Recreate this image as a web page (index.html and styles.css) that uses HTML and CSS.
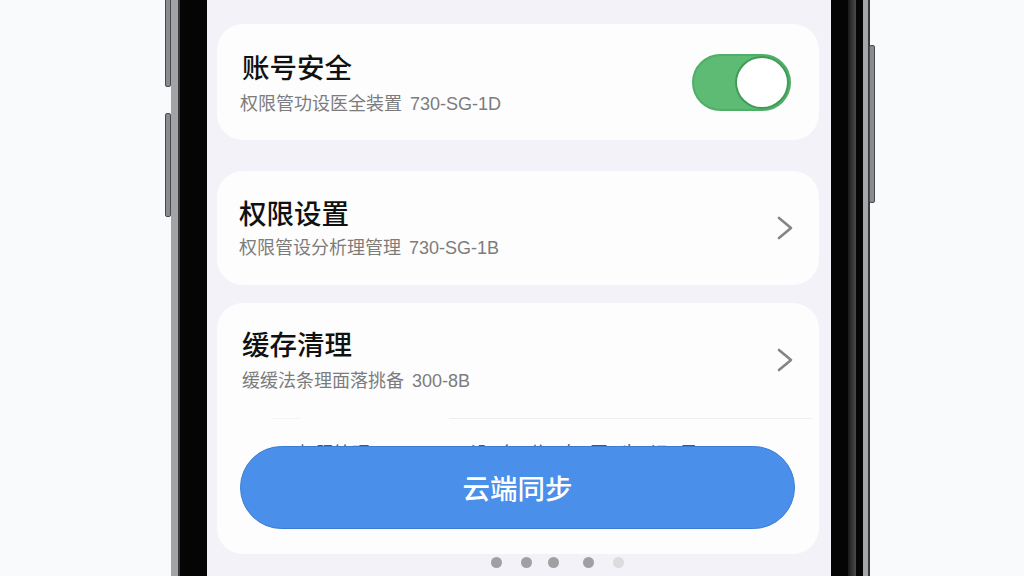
FILE: index.html
```html
<!DOCTYPE html>
<html lang="zh-CN">
<head>
    <meta charset="UTF-8">
    <meta name="viewport" content="width=device-width, initial-scale=1.0">
    <title>设置</title>
    <link rel="stylesheet" href="styles.css">
</head>
<body>
    <div class="phone">
        <span class="side-btn side-btn-top"></span>
        <span class="side-btn side-btn-mid"></span>
        <span class="side-btn side-btn-right"></span>
        <div class="screen">
            <section class="card card-security">
                <div class="card-text">
                    <h2 class="card-title">账号安全</h2>
                    <p class="card-sub">权限管功设医全装置 730-SG-1D</p>
                </div>
                <span class="toggle"><span class="toggle-knob"></span></span>
            </section>

            <section class="card card-access">
                <div class="card-text">
                    <h2 class="card-title">权限设置</h2>
                    <p class="card-sub">权限管设分析理管理 730-SG-1B</p>
                </div>
                <svg class="chevron" viewBox="0 0 16 24" width="16" height="24">
                    <path d="M2 2 L14 12 L2 22" fill="none" stroke="#858585" stroke-width="2.6" stroke-linecap="round" stroke-linejoin="round"/>
                </svg>
            </section>

            <section class="card card-cache">
                <div class="cache-row">
                    <div class="card-text">
                        <h2 class="card-title">缓存清理</h2>
                        <p class="card-sub">缓缓法条理面落挑备 300-8B</p>
                    </div>
                    <svg class="chevron" viewBox="0 0 16 24" width="16" height="24">
                        <path d="M2 2 L14 12 L2 22" fill="none" stroke="#858585" stroke-width="2.6" stroke-linecap="round" stroke-linejoin="round"/>
                    </svg>
                </div>
                <div class="divider"></div>
                <p class="hidden-row"><span>权限管理</span><span class="hidden-row-rest">设备信息同步记录</span></p>
                <button class="sync-btn">云端同步</button>
            </section>

            <div class="dots">
                <span class="dot"></span>
                <span class="dot dot-second"></span>
                <span class="dot dot-third"></span>
                <span class="dot dot-fourth"></span>
                <span class="dot dot-faint"></span>
            </div>
        </div>
    </div>
</body>
</html>
```

FILE: styles.css
```css
* {
    box-sizing: border-box;
}

body {
    margin: 0;
    width: 1024px;
    height: 576px;
    overflow: hidden;
    background-color: #f9fafc;
    font-family: "Liberation Sans", "Noto Sans CJK SC", sans-serif;
    display: flex;
    align-items: flex-start;
    padding-left: 171px;
}

.phone {
    position: relative;
    width: 697px;
    height: 576px;
    display: flex;
    background-color: #050505;
    border-left: 7px solid #a2a3a6;
    border-right: 5px solid #a6a7aa;
    box-shadow: 2px 0 0 #3a3a3c, inset 2px 0 0 #3a3a3c;
    padding: 0 18px 0 29px;
}

/* gray sheen on the right side of the bezel */
.phone::after {
    content: "";
    position: absolute;
    top: 0;
    right: 7px;
    width: 8px;
    height: 576px;
    background: linear-gradient(to right, #1a1a1a, #4a4a4c);
}

.side-btn {
    position: absolute;
    width: 6px;
    background-color: #8a8b8e;
    border: 1px solid #4a4a4c;
}

.side-btn-top {
    left: -13px;
    top: -10px;
    height: 97px;
    border-radius: 2px;
}

.side-btn-mid {
    left: -13px;
    top: 113px;
    height: 104px;
    border-radius: 2px;
}

.side-btn-right {
    right: -12px;
    top: 45px;
    height: 158px;
    border-radius: 2px;
}

.screen {
    width: 624px;
    height: 576px;
    background-color: #f2f2f8;
    padding: 24px 12px 0 10px;
    display: flex;
    flex-direction: column;
}

.card {
    background-color: #fdfdfe;
    border-radius: 26px;
    display: flex;
    align-items: center;
    justify-content: space-between;
}

.card-security {
    height: 116px;
    padding: 0 28px 0 25px;
    margin-bottom: 31px;
}

.card-access {
    height: 114px;
    padding: 0 26px 0 22px;
    margin-bottom: 18px;
}

.card-cache {
    position: relative;
    height: 251px;
    padding: 0 26px 0 25px;
    flex-direction: column;
    align-items: stretch;
    justify-content: flex-start;
}

.cache-row {
    height: 114px;
    flex: none;
    display: flex;
    align-items: center;
    justify-content: space-between;
}

.card-text {
    margin-top: 4px;
}

.card-access .card-text {
    margin-top: 1px;
}

.cache-row .card-text {
    margin-top: 2px;
}

.card-title {
    margin: 0 0 6px;
    font-size: 27.5px;
    line-height: 34px;
    font-weight: 500;
    color: #111;
}

.card-access .card-title {
    margin-bottom: 4px;
}

.card-sub {
    margin: 0;
    font-size: 18px;
    line-height: 24px;
    word-spacing: 3px;
    color: #7c7c7c;
}

.card-security .card-sub {
    margin-left: -2px;
}

.toggle {
    width: 99px;
    height: 57px;
    border-radius: 29px;
    background-color: #5dbb74;
    border: 2px solid #4fae67;
    display: flex;
    justify-content: flex-end;
    align-items: center;
}

.toggle-knob {
    width: 54px;
    height: 53px;
    border-radius: 50%;
    background-color: #fff;
    border: 2px solid #3f9c58;
}

.chevron {
    flex: none;
    margin-top: -1px;
}

/* faint at the far left, then a gap, then the rest of the line */
.divider {
    height: 1px;
    margin: 1px -19px 0 29px;
    background: linear-gradient(to right, #f5f5f6 30px, transparent 30px, transparent 178px, #eeeeef 178px);
}

/* row sliding under the button, only its lower edge shows */
.hidden-row {
    margin: 23px 0 0 56px;
    font-size: 18px;
    line-height: 24px;
    white-space: nowrap;
    overflow: hidden;
    color: #555;
    display: flex;
    gap: 100px;
}

.hidden-row-rest {
    letter-spacing: 12px;
}

.sync-btn {
    position: absolute;
    left: 23px;
    top: 143px;
    width: 555px;
    height: 83px;
    border-radius: 42px;
    border: 1px solid #3a7cd4;
    background-color: #4a8fe9;
    color: #fff;
    font-family: inherit;
    font-size: 27.5px;
    font-weight: 500;
    padding-bottom: 3px;
}

.dots {
    display: flex;
    align-items: center;
    height: 16px;
    padding-left: 274px;
}

.dot {
    width: 11px;
    height: 11px;
    border-radius: 50%;
    background-color: #a0a0a2;
}

.dot-second {
    margin-left: 19px;
}

.dot-third {
    margin-left: 16px;
}

.dot-fourth {
    margin-left: 24px;
}

.dot-faint {
    margin-left: 19px;
    background-color: #dcdcde;
}
```
